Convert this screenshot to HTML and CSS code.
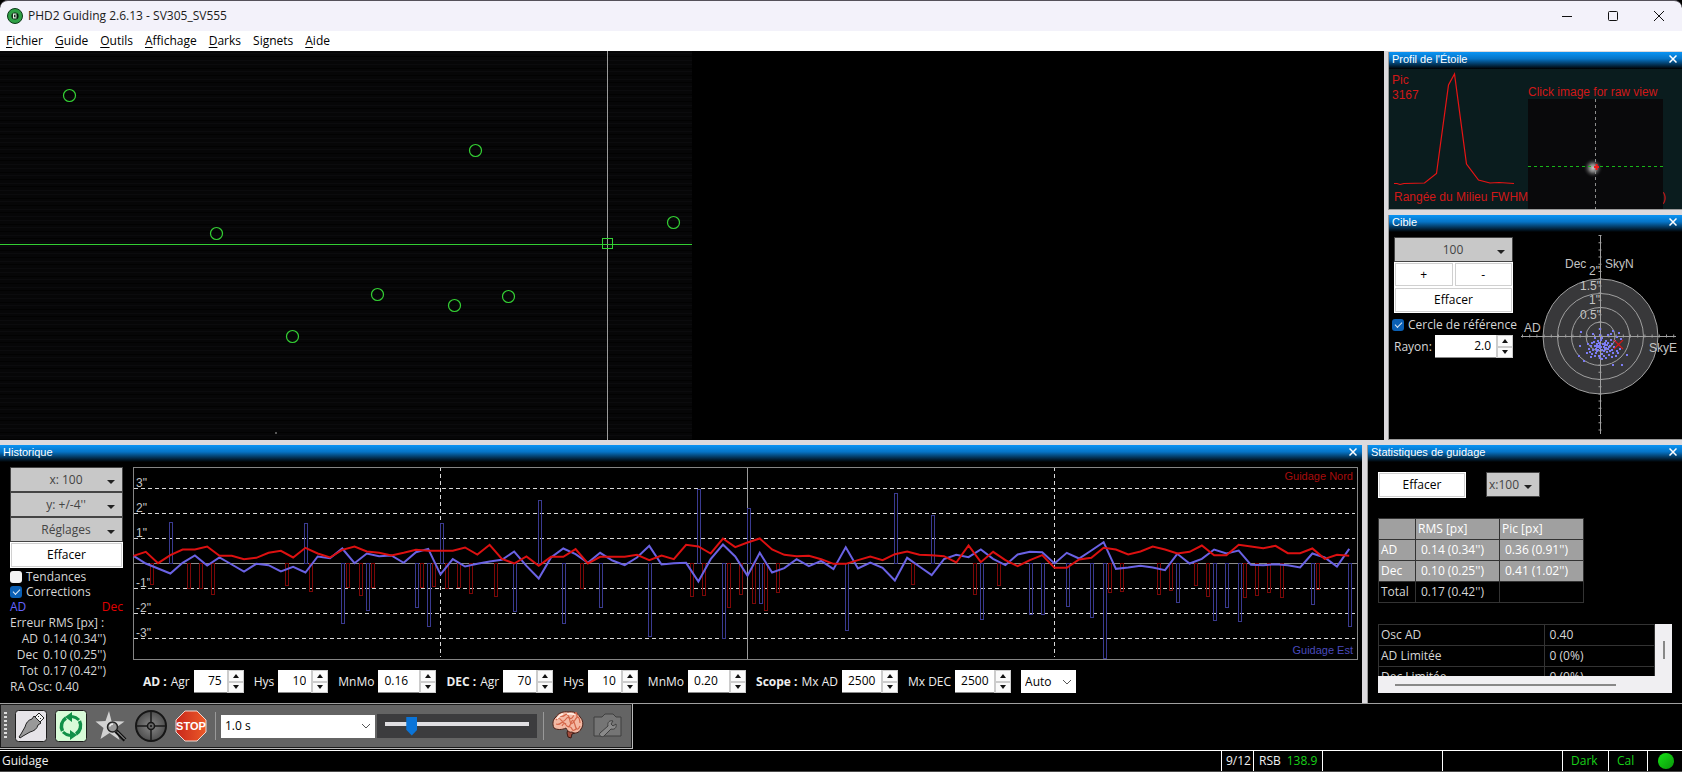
FILE: index.html
```html
<!DOCTYPE html>
<html lang="fr">
  <head>
    <meta charset="utf-8">
    <title>PHD2 Guiding</title>
    <link rel="stylesheet" href="styles.css">
  </head>
  <body onload="init()">
    <header class="titlebar">
      <svg class="app-icon" width="16" height="16" viewBox="0 0 16 16">
        <circle cx="8" cy="8" r="7.5" fill="#2fa045" stroke="#0c3a18"/>
        <circle cx="8" cy="8" r="3.6" fill="#071a0c"/>
        <path d="M9.500 6.200H6.500v3.600h3M8 8h2" fill="none" stroke="#dff5e2" stroke-width="1.200"/>
      </svg>
      <h1>PHD2 Guiding 2.6.13 - SV305_SV555</h1>
      <div class="window-buttons">
        <button aria-label="Minimize"><svg width="12" height="12" viewBox="0 0 12 12"><path d="M1 6.5h10"/></svg></button>
        <button aria-label="Maximize"><svg width="12" height="12" viewBox="0 0 12 12"><rect x="1.5" y="1.5" width="9" height="9" rx="1"/></svg></button>
        <button aria-label="Close"><svg width="12" height="12" viewBox="0 0 12 12"><path d="M1 1l10 10M11 1L1 11"/></svg></button>
      </div>
    </header>

    <nav class="menubar">
      <a href="#"><u>F</u>ichier</a>
      <a href="#"><u>G</u>uide</a>
      <a href="#"><u>O</u>utils</a>
      <a href="#"><u>A</u>ffichage</a>
      <a href="#"><u>D</u>arks</a>
      <a href="#">Signets</a>
      <a href="#"><u>A</u>ide</a>
    </nav>

    <main class="workspace">
      <div class="top-row">
        <section class="camera">
          <svg class="camera-image" width="100%" height="100%">
            <defs>
              <pattern id="rows" width="692" height="26" patternUnits="userSpaceOnUse">
                <path d="M0 2.5h692M0 9.5h692M0 13.5h692M0 20.5h692" stroke="#0b0b0d"/>
                <path d="M0 5.5h692M0 17.5h692M0 24.5h692" stroke="#020202"/>
              </pattern>
            </defs>
            <rect width="692" height="100%" fill="#060607"/>
            <rect width="692" height="100%" fill="url(#rows)"/>
            <g class="stars">
              <circle cx="69.5" cy="44.5" r="6"/>
              <circle cx="475.5" cy="99.5" r="6"/>
              <circle cx="216.5" cy="182.5" r="6"/>
              <circle cx="673.5" cy="171.5" r="6"/>
              <circle cx="377.5" cy="243.5" r="6"/>
              <circle cx="454.5" cy="254.5" r="6"/>
              <circle cx="508.5" cy="245.5" r="6"/>
              <circle cx="292.5" cy="285.5" r="6"/>
            </g>
            <rect x="275" y="381" width="2" height="2" fill="#555"/>
            <path d="M607.5 0V2000" stroke="#9a9a9a"/>
            <path d="M0 193.5H692" stroke="#34d034"/>
            <rect x="602.5" y="187.5" width="10" height="10" fill="none" stroke="#34d034"/>
          </svg>
        </section>

        <div class="side">
          <section class="pane">
            <header class="caption"><h2>Profil de l'Étoile</h2><button aria-label="Fermer"><svg width="8" height="8" viewBox="0 0 8 8"><path d="M.5.5l7 7M7.5.5l-7 7"/></svg></button></header>
            <svg class="profile" viewBox="0 0 293 140">
              <defs>
                <radialGradient id="star">
                  <stop offset="0" stop-color="#c8c8c8"/>
                  <stop offset=".4" stop-color="#777"/>
                  <stop offset="1" stop-color="#0a0a0c" stop-opacity="0"/>
                </radialGradient>
              </defs>
              <text x="3" y="15">Pic</text>
              <text x="3" y="30">3167</text>
              <text x="139" y="27">Click image for raw view</text>
              <text x="5" y="132">Rangée du Milieu FWHM</text>
              <text x="273" y="132">)</text>
              <polyline points="5,114.5 8,114.5 11,115.5 15,114.5 35.5,114 47.5,104.5 59.5,16 65.5,5 77.5,95 89.5,111 101,114 110,113.5 125,114.5"/>
              <rect x="139" y="30" width="135" height="110" fill="#09090b"/>
              <circle cx="204" cy="99" r="10" fill="url(#star)"/>
              <path d="M206.5 30V140" stroke="#8d8d8d" stroke-dasharray="3 3"/>
              <path d="M139 97.5H274" stroke="#18b418" stroke-dasharray="3 3"/>
              <path d="M205 98h5M207.5 95v6" stroke="#f01818" stroke-width="2"/>
            </svg>
          </section>

          <section class="pane grow">
            <header class="caption"><h2>Cible</h2><button aria-label="Fermer"><svg width="8" height="8" viewBox="0 0 8 8"><path d="M.5.5l7 7M7.5.5l-7 7"/></svg></button></header>
            <div class="target">
              <div class="target-controls">
                <button class="drop">100</button>
                <div class="zoom-buttons">
                  <button class="push">+</button>
                  <button class="push">-</button>
                </div>
                <button class="push tall">Effacer</button>
                <label class="check ref"><input type="checkbox" checked>Cercle de référence</label>
                <div class="radius">
                  <label for="radius">Rayon:</label>
                  <span class="spin"><input id="radius" value="2.0"><span class="arrows"><button aria-label="Plus"></button><button aria-label="Moins"></button></span></span>
                </div>
              </div>
              <svg class="target-plot" viewBox="0 0 166 206">
                <circle cx="84.5" cy="104.5" r="57.5" fill="#38383a"/>
                <g fill="none" stroke="#a0a0a0">
                  <circle cx="84.5" cy="104.5" r="57.5"/>
                  <circle cx="84.5" cy="104.5" r="43"/>
                  <circle cx="84.5" cy="104.5" r="29"/>
                  <circle cx="84.5" cy="104.5" r="14.5"/>
                  <path d="M5 104.5H160M84.5 3V202"/>
                  <path d="M6 104H160" stroke-width="3" stroke-dasharray="1 6.2"/>
                  <path d="M84 3V202" stroke-width="3" stroke-dasharray="1 6.2"/>
                </g>
                <g id="shots"></g>
                <path d="M98 108l9 9M107 108l-9 9" stroke="#d01818" stroke-width="1.200"/>
                <g class="plot-text">
                  <text x="49" y="36">Dec</text>
                  <text x="89" y="36">SkyN</text>
                  <text x="73" y="43">2"</text>
                  <text x="64" y="58">1.5"</text>
                  <text x="73" y="72">1"</text>
                  <text x="64" y="87">0.5"</text>
                  <text x="8" y="100">AD</text>
                  <text x="133" y="120">SkyE</text>
                </g>
              </svg>
            </div>
          </section>
        </div>
      </div>

      <div class="bottom-row">
        <section class="pane grow">
          <header class="caption"><h2>Historique</h2><button aria-label="Fermer"><svg width="8" height="8" viewBox="0 0 8 8"><path d="M.5.5l7 7M7.5.5l-7 7"/></svg></button></header>
          <div class="history">
            <div class="history-controls">
              <button class="drop">x: 100</button>
              <button class="drop">y: +/-4''</button>
              <button class="drop">Réglages</button>
              <button class="push tall">Effacer</button>
              <label class="check"><input type="checkbox">Tendances</label>
              <label class="check"><input type="checkbox" checked>Corrections</label>
              <div class="legend"><span class="ra">AD</span><span class="dec">Dec</span></div>
              <p>Erreur RMS [px] :</p>
              <dl>
                <dt>AD</dt><dd>0.14 (0.34'')</dd>
                <dt>Dec</dt><dd>0.10 (0.25'')</dd>
                <dt>Tot</dt><dd>0.17 (0.42'')</dd>
              </dl>
              <p>RA Osc: 0.40</p>
            </div>
            <div class="history-main">
              <svg class="graph" viewBox="0 0 1225 193">
                <path d="M.5 96.5H1224" stroke="#8c8c8c"/>
                <g stroke="#d8d8d8" stroke-dasharray="4 3">
                  <path d="M1 21.5H1222M1 46.5H1222M1 71.5H1222M1 121.5H1222M1 146.5H1222M1 171.5H1222"/>
                  <path d="M307.5 0V190M921.5 0V190"/>
                </g>
                <path d="M614.5 1V192" stroke="#9a9a9a"/>
                <rect x=".5" y=".5" width="1224" height="192" fill="none" stroke="#858585"/>
                <g class="plot-text">
                  <text x="3" y="20">3"</text>
                  <text x="3" y="45">2"</text>
                  <text x="3" y="70">1"</text>
                  <text x="3" y="120">-1"</text>
                  <text x="3" y="145">-2"</text>
                  <text x="3" y="170">-3"</text>
                </g>
                <text class="north" x="1220" y="13">Guidage Nord</text>
                <text class="east" x="1220" y="187">Guidage Est</text>
                <g id="pulses"></g>
                <polyline id="raLine"/>
                <polyline id="decLine"/>
              </svg>
              <form class="params">
                <b>AD :</b>
                <label for="raAgr">Agr</label><span class="spin w50"><input id="raAgr" value="75"><span class="arrows"><button type="button" aria-label="Plus"></button><button type="button" aria-label="Moins"></button></span></span>
                <label for="raHys">Hys</label><span class="spin w50"><input id="raHys" value="10"><span class="arrows"><button type="button" aria-label="Plus"></button><button type="button" aria-label="Moins"></button></span></span>
                <label for="raMin">MnMo</label><span class="spin w58 left"><input id="raMin" value="0.16"><span class="arrows"><button type="button" aria-label="Plus"></button><button type="button" aria-label="Moins"></button></span></span>
                <b>DEC :</b>
                <label for="decAgr">Agr</label><span class="spin w50"><input id="decAgr" value="70"><span class="arrows"><button type="button" aria-label="Plus"></button><button type="button" aria-label="Moins"></button></span></span>
                <label for="decHys">Hys</label><span class="spin w50"><input id="decHys" value="10"><span class="arrows"><button type="button" aria-label="Plus"></button><button type="button" aria-label="Moins"></button></span></span>
                <label for="decMin">MnMo</label><span class="spin w58 left"><input id="decMin" value="0.20"><span class="arrows"><button type="button" aria-label="Plus"></button><button type="button" aria-label="Moins"></button></span></span>
                <b>Scope :</b>
                <label for="mxRa">Mx AD</label><span class="spin w56 left"><input id="mxRa" value="2500"><span class="arrows"><button type="button" aria-label="Plus"></button><button type="button" aria-label="Moins"></button></span></span>
                <label for="mxDec">Mx DEC</label><span class="spin w56 left"><input id="mxDec" value="2500"><span class="arrows"><button type="button" aria-label="Plus"></button><button type="button" aria-label="Moins"></button></span></span>
                <select class="auto" aria-label="Dec mode"><option>Auto</option></select>
              </form>
            </div>
          </div>
        </section>

        <section class="pane stats-pane">
          <header class="caption"><h2>Statistiques de guidage</h2><button aria-label="Fermer"><svg width="8" height="8" viewBox="0 0 8 8"><path d="M.5.5l7 7M7.5.5l-7 7"/></svg></button></header>
          <div class="stats">
            <div class="stats-buttons">
              <button class="push">Effacer</button>
              <button class="drop small">x:100</button>
            </div>
            <table class="rms">
              <tr><th></th><th>RMS [px]</th><th>Pic [px]</th></tr>
              <tr><th>AD</th><td>0.14 (0.34'')</td><td>0.36 (0.91'')</td></tr>
              <tr><th>Dec</th><td>0.10 (0.25'')</td><td>0.41 (1.02'')</td></tr>
              <tr class="total"><th>Total</th><td>0.17 (0.42'')</td><td></td></tr>
            </table>
            <div class="scroller">
              <div class="scroll-view">
                <table class="extra">
                  <tr><th>Osc AD</th><td>0.40</td></tr>
                  <tr><th>AD Limitée</th><td>0 (0%)</td></tr>
                  <tr><th>Dec Limitée</th><td>0 (0%)</td></tr>
                </table>
              </div>
              <div class="vbar"><i></i></div>
              <div class="hbar"><i></i></div>
            </div>
          </div>
        </section>
      </div>
    </main>

    <div class="toolbar">
      <i class="grip"></i>
      <button class="tool" aria-label="Connecter">
        <svg width="32" height="32" viewBox="0 0 32 32">
          <rect x=".5" y=".5" width="31" height="31" rx="3" fill="#e6e4e8" stroke="#1c1c1c"/>
          <path d="M20 7l4-4 5 5-4 4z" fill="#f4f4f4" stroke="#222"/>
          <path d="M23 6l1 1M25 8l1 1" stroke="#222"/>
          <path d="M17 9l2-3 7 7-3 2c-1 4-4 6-8 7l-7 4-3 2-1-1 2-3 4-7c1-4 3-7 7-8z" fill="#999" stroke="#222"/>
        </svg>
      </button>
      <button class="tool" aria-label="Boucle">
        <svg width="32" height="32" viewBox="0 0 32 32">
          <rect x=".5" y=".5" width="31" height="31" rx="3" fill="#d8fbd8" stroke="#1c1c1c"/>
          <path d="M7.500 21A10 10 0 0 1 11 8M24.500 11A10 10 0 0 1 21 24" fill="none" stroke="#109048" stroke-width="3.500"/>
          <path d="M17 2v10l-7-5zM15 20v10l7-5z" fill="#109048"/>
          <path d="M17 6.500q4 .5 7 3.500M15 25.500q-4-.5-7-3.500" fill="none" stroke="#109048" stroke-width="3"/>
        </svg>
      </button>
      <button class="tool" aria-label="Sélection automatique">
        <svg width="32" height="32" viewBox="0 0 32 32">
          <path d="M14 1l2.500 10 13 .5-9 6.500 4 12-10-7-9 6 3-11-8-6.500 10-.5z" fill="#d2d2d2"/>
          <path d="M21 21l9 9" stroke="#111" stroke-width="4"/>
          <path d="M22 21.500l8 8" stroke="#bbb"/>
          <circle cx="17.500" cy="17" r="5" fill="#999" stroke="#222" stroke-width="1.500"/>
          <path d="M14.500 16.500q1-2.500 3.500-2.500" fill="none" stroke="#eee" stroke-width="1.500"/>
        </svg>
      </button>
      <button class="tool" aria-label="Guider">
        <svg width="32" height="32" viewBox="0 0 32 32">
          <defs><radialGradient id="scope"><stop offset="0" stop-color="#888"/><stop offset="1" stop-color="#4e4e4e"/></radialGradient></defs>
          <circle cx="16" cy="16" r="15" fill="url(#scope)" stroke="#161616" stroke-width="2"/>
          <path d="M16 1v30M1 16h30" stroke="#1a1a1a" stroke-width="1.500"/>
          <circle cx="16" cy="16" r="3.500" fill="#666" stroke="#161616" stroke-width="1.500"/>
          <circle cx="16" cy="16" r="1" fill="#111"/>
        </svg>
      </button>
      <button class="tool" aria-label="Stop">
        <svg width="32" height="32" viewBox="0 0 32 32">
          <defs><linearGradient id="red" x2="1"><stop offset="0" stop-color="#c8281c"/><stop offset="1" stop-color="#ec5a28"/></linearGradient></defs>
          <path d="M10 1h12l9 9v12l-9 9H10l-9-9V10z" fill="url(#red)" stroke="#f2d8d0"/>
          <text class="stop-text" x="16" y="20">STOP</text>
        </svg>
      </button>
      <i class="sep"></i>
      <select class="exposure" aria-label="Exposition"><option>1.0 s</option></select>
      <div class="gamma"><input type="range" min="0" max="100" value="16" aria-label="Gamma"></div>
      <i class="sep"></i>
      <button class="tool" aria-label="Paramètres avancés">
        <svg width="32" height="32" viewBox="0 0 32 32">
          <path d="M16 19l9-1-2 5-3 1-1 4-3-1-1-4z" fill="#a34c3c" stroke="#3a1a14"/>
          <path d="M2 18C0 14 1 9 4 7c2-4 8-6 12-5 5-1 10 1 12 5 3 3 4 8 1 12-2 4-6 5-9 3-3 1-5-2-6-4-4 2-9 2-12 0z" fill="#f4b9a4" stroke="#4a2018"/>
          <path d="M4 10q3-3 5 0t5-1 4 2 5-1 5 3M4 14q3 1 5-1t5 2 5-2 4 2 5 1M8 6q3 1 5-1t4 2 5-2 3 3M16 17q3-1 4 2t5-1M10 16q2-4 4-2" fill="none" stroke="#d4664a" stroke-width="1.200"/>
          <path d="M5 9q2-4 6-5M15 4q5-1 8 1" fill="none" stroke="#fff0e8" stroke-width="1.500"/>
        </svg>
      </button>
      <button class="tool" aria-label="Réglages caméra" disabled>
        <svg width="32" height="32" viewBox="0 0 32 32">
          <path d="M2 7h8l3-3h8l3 3h5v19H2z" fill="#757575" stroke="#3f3f3f"/>
          <path d="M8 23l8-7c-1-4 2-6 5-5l-2 3 2 2 3-2c1 4-2 6-5 5l-7 7c-2 2-6-1-4-3z" fill="#8a8a8a" stroke="#3f3f3f"/>
        </svg>
      </button>
    </div>

    <footer class="statusbar">
      <span class="message">Guidage</span>
      <span class="w32">9/12</span>
      <span class="w69">RSB&ensp;<em>138.9</em></span>
      <span class="w120"></span>
      <span class="w120"></span>
      <span class="w46"><em>Dark</em></span>
      <span class="w39"><em>Cal</em></span>
      <span class="w35"><i class="led"></i></span>
    </footer>
    <script src="graph.js"></script>
  </body>
</html>
```
FILE: styles.css
```css
* {
  box-sizing: border-box;
}
html, body {
  margin: 0;
  padding: 0;
  height: 100%;
}
body {
  display: flex;
  flex-direction: column;
  background: #000;
  color: #d6d6d6;
  font: 12px/16px "Open Sans", "Noto Sans", sans-serif;
}
button, input, select {
  font: inherit;
  margin: 0;
  padding: 0;
  border: 0;
  border-radius: 0;
}
h1, h2, p, dl, dd {
  margin: 0;
  font-size: inherit;
  font-weight: normal;
}

/* title and menus */
.titlebar {
  display: flex;
  align-items: center;
  height: 31px;
  padding-left: 7px;
  gap: 5px;
  background: #f3f2fa;
  border-top: 1px solid #55525a;
  border-radius: 8px 8px 0 0;
  color: #1b1b1b;
}
.window-buttons {
  display: flex;
  margin-left: auto;
}
.window-buttons button {
  width: 46px;
  height: 30px;
  background: none;
}
.window-buttons svg {
  display: block;
  margin: auto;
  fill: none;
  stroke: #111;
}
.menubar {
  display: flex;
  gap: 12px;
  padding: 2px 6px;
  height: 20px;
  background: #fff;
}
.menubar a {
  color: #000;
  text-decoration: none;
}
.menubar u {
  text-underline-offset: 2px;
}

/* panes */
.workspace {
  flex: 1;
  min-height: 0;
  display: flex;
  flex-direction: column;
  gap: 5px;
  background: #dcdadd;
  border-bottom: 1px solid #a0a0a0;
}
.top-row {
  flex: 1;
  min-height: 0;
  display: flex;
  gap: 4px;
}
.bottom-row {
  display: flex;
  gap: 5px;
}
.camera {
  flex: 1;
  min-width: 0;
  overflow: hidden;
  background: #000;
}
.camera-image {
  display: block;
}
.stars circle {
  fill: none;
  stroke: #34d034;
  stroke-width: 1.2;
}
.side {
  width: 294px;
  display: flex;
  flex-direction: column;
  gap: 5px;
  padding-top: 1px;
}
.pane {
  background: #000;
  border-left: 1px solid #999;
  border-bottom: 1px solid #999;
}
.bottom-row .pane {
  border-bottom: 0;
}
.bottom-row .pane:first-child {
  border-left: 0;
}
.grow {
  flex: 1;
  min-width: 0;
}
.caption {
  display: flex;
  align-items: center;
  justify-content: space-between;
  height: 17px;
  padding: 0 5px 3px 3px;
  background: linear-gradient(#0a94f4, #0674c6 40%, #000);
  color: #fff;
  font: 11px/14px "Liberation Sans", sans-serif;
}
.caption button {
  width: 8px;
  height: 8px;
  background: none;
}
.caption svg {
  display: block;
  fill: none;
  stroke: #fff;
  stroke-width: 1.5;
}

/* widgets */
.push, .drop {
  display: block;
  width: 100%;
  height: 25px;
  text-align: center;
}
.push {
  background: #fff;
  color: #000;
  border: 1px solid #fff;
  box-shadow: inset 0 0 0 1px #d0d0d0;
}
.push.tall {
  height: 26px;
  margin-bottom: 1px;
}
.drop {
  position: relative;
  padding-right: 1px;
  background: #c8c8c8;
  color: #444;
  border: 1px solid #444;
}
.drop::after {
  content: "";
  position: absolute;
  right: 7px;
  top: 12px;
  border: 4px solid transparent;
  border-top-color: #222;
  border-bottom: 0;
}
.drop.small {
  width: 54px;
  padding: 0 18px 0 0;
}
.check {
  display: flex;
  align-items: center;
  gap: 4px;
  height: 15px;
  white-space: nowrap;
}
.check input {
  appearance: none;
  flex: none;
  width: 12px;
  height: 12px;
  background: #f4f4f4;
  border-radius: 3px;
}
.check input:checked {
  background: #0a5fb4;
}
.check input:checked::before {
  content: "";
  display: block;
  width: 6px;
  height: 3px;
  margin: 3px;
  border: solid #dce9f6;
  border-width: 0 0 1px 1px;
  transform: rotate(-45deg);
}
.spin {
  display: flex;
  height: 23px;
  background: #fff;
}
.spin input {
  flex: 1;
  min-width: 0;
  width: 0;
  padding-right: 5px;
  background: #fff;
  color: #000;
  text-align: right;
  border-bottom: 1px solid #888;
}
.spin.left input {
  padding: 0 0 0 6px;
  text-align: left;
}
.arrows {
  display: flex;
  flex-direction: column;
  width: 17px;
  border-left: 1px solid #ccc;
  background: #f0f0f0;
}
.arrows button {
  flex: 1;
  background: #fafafa;
  border: 1px solid #ccc;
}
.arrows button::before {
  content: "";
  display: block;
  width: 0;
  margin: auto;
  border: 3px solid transparent;
  border-bottom: 4px solid #111;
  border-top: 0;
}
.arrows button:last-child::before {
  border-top: 4px solid #111;
  border-bottom: 0;
}
.w50 { width: 50px; }
.w56 { width: 56px; }
.w58 { width: 58px; }

/* star profile */
.profile {
  display: block;
  width: 100%;
  background: #0a1c1e;
  font: 12px "Liberation Sans", sans-serif;
}
.profile text {
  fill: #d01818;
}
.profile polyline {
  fill: none;
  stroke: #e81414;
  stroke-width: 1.2;
}

/* target */
.target {
  display: flex;
  align-items: flex-start;
  padding-left: 5px;
}
.target-controls {
  width: 119px;
  padding-top: 5px;
}
.zoom-buttons {
  display: flex;
}
.check.ref {
  height: 21px;
  margin-left: -2px;
}
.radius {
  display: flex;
  align-items: center;
  justify-content: space-between;
}
.radius .spin {
  width: 78px;
}
.target-plot {
  flex: 1;
  min-width: 0;
  margin-left: 3px;
}
.plot-text {
  font: 12px "Liberation Sans", sans-serif;
  fill: #c4c4c4;
}
#shots rect {
  fill: #4a4a90;
  stroke: #7c7cf4;
}

/* history */
.history {
  display: flex;
  gap: 10px;
  padding: 5px 4px 8px 10px;
}
.history-controls {
  width: 113px;
}
.history-controls > p, dl {
  line-height: 16px;
}
.legend {
  display: flex;
  justify-content: space-between;
  height: 16px;
  line-height: 15px;
}
.ra {
  color: #6464ff;
}
.dec {
  color: #e00000;
}
dl {
  display: grid;
  grid-template-columns: 28px 1fr;
  column-gap: 5px;
}
dt {
  text-align: right;
}
.history-main {
  flex: 1;
  min-width: 0;
}
.graph {
  display: block;
  width: 100%;
}
.north, .east {
  font: 11px "Liberation Sans", sans-serif;
  text-anchor: end;
  fill: #a80c0c;
}
.east {
  fill: #4a4abc;
}
#raLine, #decLine {
  fill: none;
  stroke: #6a62e4;
  stroke-width: 2;
}
#decLine {
  stroke: #dc1010;
}
#pulses rect {
  fill: none;
  stroke: #3a3a90;
}
#pulses .dec-pulse {
  stroke: #7c0808;
}
.params {
  display: flex;
  align-items: center;
  gap: 4px;
  padding: 10px 0 0 10px;
  color: #eee;
}
.params .spin {
  margin-right: 6px;
}
.auto, .exposure {
  appearance: none;
  width: 55px;
  height: 23px;
  padding-left: 4px;
  background: #fff url("data:image/svg+xml,%3Csvg xmlns='http://www.w3.org/2000/svg' width='10' height='6'%3E%3Cpath d='M1 1l4 4 4-4' fill='none' stroke='%23555'/%3E%3C/svg%3E") no-repeat right 4px center;
  color: #000;
}

/* statistics */
.stats-pane {
  width: 315px;
}
.stats {
  padding: 10px 10px 8px;
}
.stats-buttons {
  display: flex;
  gap: 20px;
  margin-bottom: 20px;
}
.stats-buttons .push {
  width: 88px;
  height: 26px;
}
table {
  border-collapse: collapse;
  table-layout: fixed;
}
th, td {
  height: 21px;
  padding: 0 0 0 5px;
  border: 1px solid #333;
  font-weight: normal;
  text-align: left;
  line-height: 16px;
}
th {
  padding-left: 2px;
}
.rms {
  width: 206px;
  margin-bottom: 21px;
  border-left: 1px solid #999;
  background: #a0a0a0;
  color: #fff;
}
.rms th:first-child {
  width: 37px;
}
.rms .total {
  background: #000;
  color: #d6d6d6;
}
.scroller {
  display: grid;
  grid-template-columns: 1fr 17px;
  background: #f0eff2;
}
.scroll-view {
  height: 52px;
  overflow: hidden;
  background: #000;
}
.extra {
  width: 100%;
  border-top: 1px solid #999;
}
.extra th {
  width: 60%;
}
.vbar i {
  display: block;
  width: 2px;
  height: 18px;
  margin: 17px 8px;
  background: #888;
}
.hbar {
  grid-column: 1 / 3;
  height: 17px;
}
.hbar i {
  display: block;
  width: 75%;
  height: 2px;
  margin: 8px 17px;
  background: #888;
}

/* toolbar */
.toolbar {
  align-self: flex-start;
  display: flex;
  align-items: center;
  gap: 8px;
  height: 45px;
  padding: 0 8px 0 4px;
  background: #646464;
  border: solid #bbb;
  border-width: 0 1px 1px 0;
  box-shadow: inset 0 0 0 1px #1a1a1a;
}
.grip {
  width: 3px;
  height: 28px;
  background: repeating-linear-gradient(#ddd 0 2px, transparent 2px 4px);
}
.tool {
  width: 32px;
  height: 32px;
  background: none;
}
.tool svg {
  display: block;
}
.stop-text {
  font: bold 11px "Liberation Sans", sans-serif;
  fill: #fff;
  text-anchor: middle;
}
.sep {
  width: 1px;
  height: 28px;
  background: #999;
}
.exposure {
  width: 154px;
  margin-left: -3px;
}
.gamma {
  width: 160px;
  height: 24px;
  margin: 0 -2px 0 -6px;
  padding: 0 8px;
  background: #3c3c3e;
}
.gamma input {
  appearance: none;
  display: block;
  width: 100%;
  height: 24px;
  background: linear-gradient(#e0dfe2, #e0dfe2) no-repeat center 8px / 100% 4px;
}
.gamma input::-webkit-slider-thumb {
  appearance: none;
  width: 11px;
  height: 19px;
  background: #0a74d8;
  clip-path: polygon(0 0, 100% 0, 100% 70%, 50% 100%, 0 70%);
}

/* status bar */
.statusbar {
  display: flex;
  height: 22px;
  margin-top: 1px;
  border-top: 1px solid #fff;
  border-bottom: 1px solid #4a4a4a;
  color: #f0f0f0;
  line-height: 20px;
}
.statusbar span {
  padding-left: 5px;
  border-left: 1px solid #fff;
}
.statusbar .message {
  flex: 1;
  padding-left: 2px;
  border: 0;
}
.statusbar em {
  font-style: normal;
  color: #18d018;
}
.statusbar .w32 { width: 32px; padding-left: 4px; }
.w69 { width: 69px; }
.w120 { width: 120px; }
.statusbar .w46 { width: 46px; padding-left: 8px; }
.statusbar .w39 { width: 39px; padding-left: 8px; }
.statusbar .w35 { width: 35px; padding: 2px 0 0 10px; }
.led {
  display: block;
  width: 16px;
  height: 16px;
  border-radius: 50%;
  background: linear-gradient(135deg, #16e216, #0a960a);
}
```
FILE: graph.js
```js
// guide samples, in 1/75 arcsec
var dec = [23,35,1,25,42,42,51,23,23,13,17,32,38,18,47,30,18,41,51,36,32,24,32,41,38,
  38,38,48,27,56,14,0,21,-7,20,20,43,0,20,20,20,26,10,24,13,56,51,30,75,49,
  63,75,42,26,22,23,13,-1,-1,10,21,10,28,36,26,25,22,3,54,4,35,10,-8,10,25,
  -13,-13,12,17,47,42,27,36,51,42,30,35,54,25,25,56,51,46,53,31,31,45,14,26,23];
var ra = [23,0,-15,-30,2,24,-6,18,-3,-24,-1,-5,-24,-10,-27,21,16,45,1,30,22,24,2,34,44,
  -33,13,-9,-1,6,11,36,-7,-45,18,45,28,2,32,9,-5,18,53,-3,1,2,-54,13,57,21,
  -37,32,-27,-14,13,-8,8,-17,49,-15,3,-13,-51,17,-9,-35,13,26,19,42,14,-5,27,35,34,
  0,32,15,39,64,-16,-12,-7,-12,-20,29,0,14,42,30,39,-4,-5,-2,-5,-12,30,18,-9,44];

// [sample, pulse length], same unit
var raPulses = [[3,123],[14,120],[17,-180],[19,-141],[23,-132],[24,-189],[25,120],[31,-144],
  [33,189],[35,-180],[38,-132],[42,-219],[46,222],[48,-225],[50,165],[51,-120],[58,-201],
  [62,210],[65,144],[69,-168],[73,-153],[74,-153],[76,-129],[78,-162],[79,-285],[85,-117],
  [88,-171],[89,-132],[90,-174],[96,-123],[99,-189]];
var decPulses = [[1,-63],[4,-75],[5,-75],[6,-93],[12,-66],[14,-84],[17,-72],[18,-96],[19,-72],
  [23,-72],[24,-69],[25,-75],[26,-72],[27,-90],[29,-99],[36,-75],[45,-99],[46,-96],[48,-132],
  [49,-93],[50,-120],[51,-141],[52,-87],[63,-63],[68,-93],[70,-66],[79,-87],[80,-84],[83,-93],
  [84,-81],[86,-66],[87,-99],[90,-102],[91,-96],[92,-87],[93,-102],[96,-78]];

var shots = [[65,100],[77,102],[84,97],[97,99],[103,101],[105,107],[64,114],[63,124],[68,129],
  [71,121],[73,117],[74,120],[75,114],[76,122],[72,112],[77,118],[78,110],[79,106],[79,114],
  [80,117],[80,121],[81,112],[81,115],[82,114],[82,118],[83,111],[83,115],[84,113],[84,116],
  [85,108],[85,115],[80,114],[83,124],[84,126],[86,122],[86,118],[87,112],[88,115],[88,119],
  [89,111],[89,113],[90,109],[90,116],[91,113],[91,120],[92,117],[92,111],[93,123],[94,119],
  [94,114],[95,108],[96,112],[96,118],[97,121],[98,115],[92,103],[95,102],[84,103],[88,124],
  [90,126],[86,127],[79,124],[75,125],[101,119],[99,109],[102,121],[97,133],[106,133],[111,123],
  [100,124],[93,115],[89,117],[82,109],[76,111],[86,106],[81,119],[96,125],[104,117],[101,105]];

var SVG = 'http://www.w3.org/2000/svg';

function box(parent, x, y, w, h, name) {
  var r = document.createElementNS(SVG, 'rect');
  r.setAttribute('x', x);
  r.setAttribute('y', y);
  r.setAttribute('width', w);
  r.setAttribute('height', h);
  if (name) r.setAttribute('class', name);
  parent.appendChild(r);
}

function sampleX(i) {
  return 0.5 + i * 12.28;
}

function line(id, data) {
  var points = data.map(function (v, i) {
    return sampleX(i) + ',' + (96.5 - v / 3);
  });
  document.getElementById(id).setAttribute('points', points.join(' '));
}

function pulses(data, offset, name) {
  var g = document.getElementById('pulses');
  data.forEach(function (p) {
    var x = Math.round(sampleX(p[0]) + offset) - 0.5;
    var h = Math.abs(p[1]) / 3;
    box(g, x, p[1] > 0 ? 96.5 - h : 96.5, 3, h, name);
  });
}

function init() {
  pulses(raPulses, 0, 'ra-pulse');
  pulses(decPulses, 5, 'dec-pulse');
  line('raLine', ra);
  line('decLine', dec);
  shots.forEach(function (s) {
    box(document.getElementById('shots'), s[0] - 0.5, s[1] - 0.5, 1, 1);
  });
}
```
